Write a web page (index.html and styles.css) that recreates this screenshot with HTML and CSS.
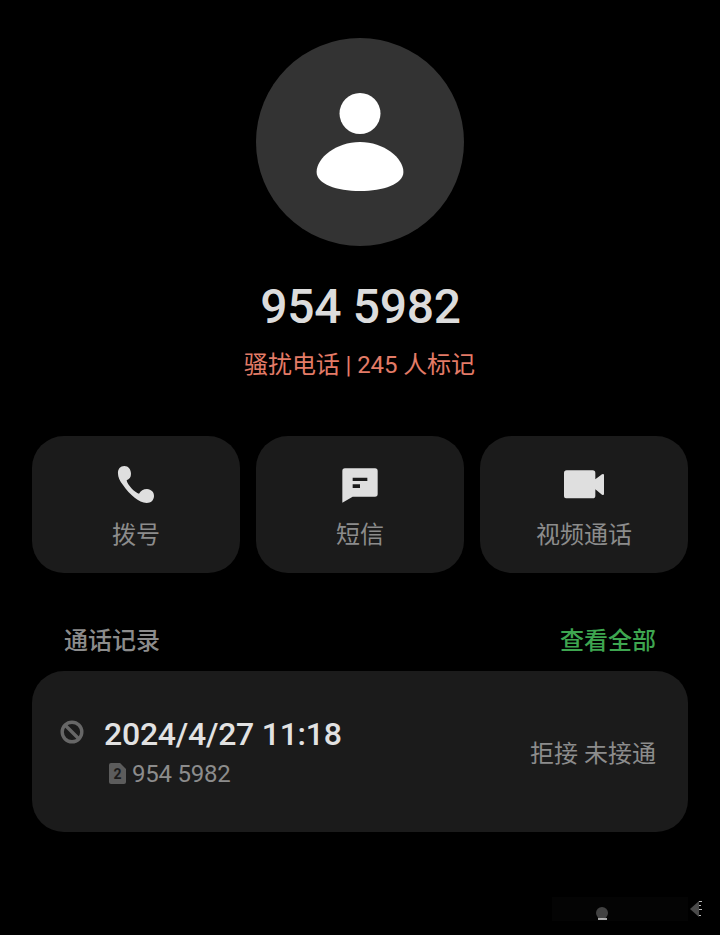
FILE: index.html
```html
<!DOCTYPE html>
<html lang="zh-CN">
<head>
    <meta charset="UTF-8">
    <meta name="viewport" content="width=device-width, initial-scale=1.0">
    <title>954 5982</title>
    <link rel="stylesheet" href="styles.css">
</head>
<body>
    <header class="contact">
        <div class="avatar">
            <svg width="88" height="100" viewBox="0 0 88 100" fill="#fff">
                <circle cx="44" cy="21.5" r="20.5"/>
                <path d="M.6 80C.6 66 20 50 44 50s43.400 16 43.400 30c0 12-20 19-43.400 19S.6 92 .6 80z"/>
            </svg>
        </div>
        <h1 class="number">954 5982</h1>
        <p class="tag">骚扰电话 | 245 人标记</p>
    </header>

    <nav class="actions">
        <a class="action">
            <svg class="action-icon" viewBox="288 117 120 120">
                <path d="M294 146C293 132 301 123 313 123C325 123 333 133 333 146C333 157 328 162 320 166C321 178 345 204 357 206C362 197 370 192 381 192C394 193 403 202 402 214C401 227 393 234 380 234C368 233 355 227 344 218C332 209 318 194 309 180C299 167 294 156 294 146z"/>
            </svg>
            <span>拨号</span>
        </a>
        <a class="action">
            <svg class="action-icon" viewBox="270 117 120 120">
                <path fill-rule="evenodd" d="M285 130h90q8 0 8 8v69q0 8-8 8h-67l-31 18v-95q0-8 8-8zM308 158v10h44v-10zM308 178v11h22v-11z"/>
            </svg>
            <span>短信</span>
        </a>
        <a class="action">
            <svg class="action-icon" viewBox="282 117 120 120">
                <path d="M290 136h78q8 0 8 8v19l20-15q6-3 6 3v55q0 6-6 3l-20-16v19q0 8-8 8h-80q-6 0-6-6v-70q0-8 8-8z"/>
            </svg>
            <span>视频通话</span>
        </a>
    </nav>

    <section class="history">
        <div class="history-header">
            <h2>通话记录</h2>
            <a class="view-all">查看全部</a>
        </div>
        <div class="record">
            <svg class="blocked" width="24" height="24" viewBox="0 0 24 24" fill="none" stroke="#676767" stroke-width="3.4">
                <circle cx="12" cy="12" r="9.800"/>
                <path d="M5 5l14 14"/>
            </svg>
            <div class="record-info">
                <div class="date">2024/4/27 11:18</div>
                <div class="line">
                    <span class="sim">2</span>
                    <span>954 5982</span>
                </div>
            </div>
            <div class="status">拒接 未接通</div>
        </div>
    </section>

    <footer class="footer">
        <svg width="152" height="28" viewBox="0 0 152 28">
            <rect width="136" height="24" fill="#040404"/>
            <circle cx="50" cy="16" r="6" fill="#424242"/>
            <path d="M46 22h9" stroke="#ddd" stroke-width="1.500"/>
            <path d="M138 12l9-8v16z" fill="#4a4a4a"/>
            <path d="M147 4.500h3M147 8.500h2M147 12.500h3M147 18.500h2" stroke="#bbb"/>
        </svg>
    </footer>
</body>
</html>
```

FILE: styles.css
```css
* {
    box-sizing: border-box;
}
body {
    margin: 0;
    padding: 38px 32px 0;
    height: 935px;
    background-color: #000;
    color: #8c8c8c;
    font-family: Roboto, "Noto Sans CJK SC", sans-serif;
    font-size: 24px;
    line-height: 32px;
    display: flex;
    flex-direction: column;
}
h1, h2, p {
    margin: 0;
}
.contact {
    display: flex;
    flex-direction: column;
    align-items: center;
}
.avatar {
    display: flex;
    align-items: center;
    justify-content: center;
    width: 208px;
    height: 208px;
    border-radius: 50%;
    background-color: #333;
}
.number {
    margin-top: 33px;
    padding-left: 1px;
    font-size: 48px;
    font-weight: 500;
    line-height: 56px;
    letter-spacing: -0.3px;
    color: #dcdcdc;
}
.tag {
    margin-top: 14px;
    padding-right: 1px;
    letter-spacing: -0.1px;
    color: #e37b67;
}
.actions {
    display: grid;
    grid-template-columns: repeat(3, 1fr);
    gap: 16px;
    margin-top: 55px;
}
.action {
    display: flex;
    flex-direction: column;
    align-items: center;
    height: 137px;
    padding-top: 28px;
    border-radius: 32px;
    background-color: #1b1b1b;
}
.action-icon {
    width: 40px;
    height: 40px;
    margin-bottom: 15px;
    fill: #dfdfdf;
}
.history-header {
    display: flex;
    justify-content: space-between;
    padding: 52px 32px 14px;
}
.history-header h2 {
    font-size: 24px;
    font-weight: 500;
}
.view-all {
    color: #3ea650;
    font-weight: 500;
}
.record {
    display: flex;
    align-items: center;
    height: 161px;
    padding: 0 32px 0 28px;
    border-radius: 32px;
    background-color: #1b1b1b;
}
.blocked {
    margin: 0 20px 40px 0;
}
.record-info {
    flex: 1;
}
.date {
    padding-top: 2px;
    font-size: 32px;
    font-weight: 500;
    line-height: 40px;
    letter-spacing: -0.25px;
    color: #e2e2e2;
}
.line {
    display: flex;
    align-items: center;
    gap: 6px;
    padding: 2px 0 0 5px;
    line-height: 36px;
    letter-spacing: -0.25px;
}
.sim {
    width: 17px;
    height: 21px;
    background-color: #5c5c5c;
    border-radius: 2px;
    clip-path: polygon(0 0, 65% 0, 100% 28%, 100% 100%, 0 100%);
    color: #1b1b1b;
    font-size: 14px;
    font-weight: 700;
    line-height: 22px;
    text-align: center;
}
.status {
    padding-top: 4px;
}
.footer {
    display: flex;
    justify-content: flex-end;
    margin: 65px -16px 0 0;
}
```
